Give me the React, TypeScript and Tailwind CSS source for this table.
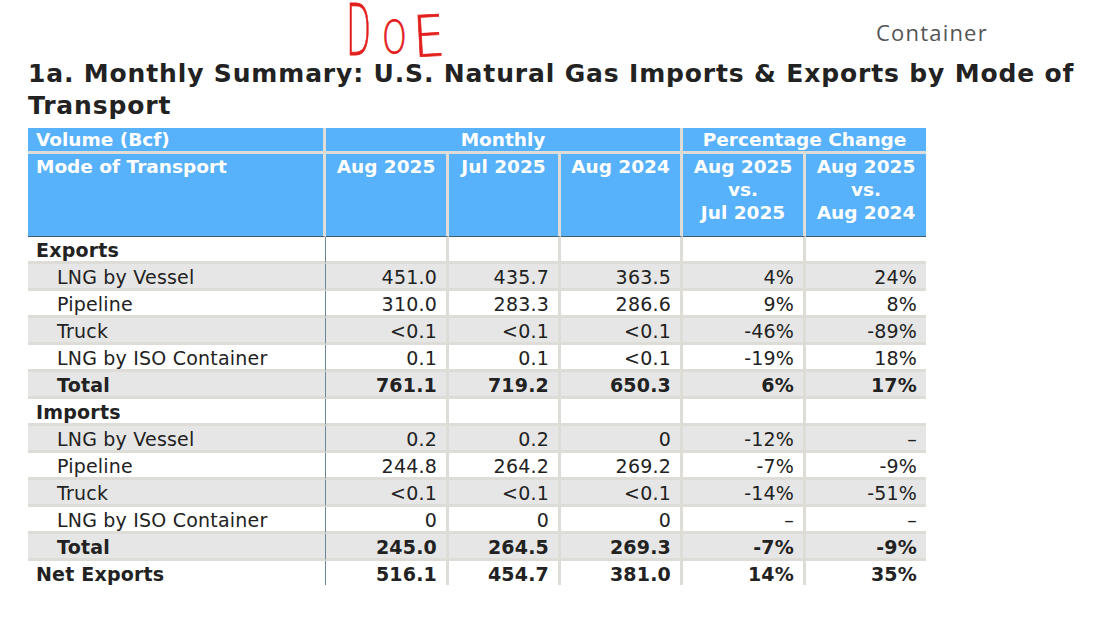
import React from "react";

type Row = {
  label: string;
  kind: "section" | "item" | "total" | "net";
  vals?: string[];
};

const rows: Row[] = [
  { label: "Exports", kind: "section" },
  { label: "LNG by Vessel", kind: "item", vals: ["451.0", "435.7", "363.5", "4%", "24%"] },
  { label: "Pipeline", kind: "item", vals: ["310.0", "283.3", "286.6", "9%", "8%"] },
  { label: "Truck", kind: "item", vals: ["<0.1", "<0.1", "<0.1", "-46%", "-89%"] },
  { label: "LNG by ISO Container", kind: "item", vals: ["0.1", "0.1", "<0.1", "-19%", "18%"] },
  { label: "Total", kind: "total", vals: ["761.1", "719.2", "650.3", "6%", "17%"] },
  { label: "Imports", kind: "section" },
  { label: "LNG by Vessel", kind: "item", vals: ["0.2", "0.2", "0", "-12%", "–"] },
  { label: "Pipeline", kind: "item", vals: ["244.8", "264.2", "269.2", "-7%", "-9%"] },
  { label: "Truck", kind: "item", vals: ["<0.1", "<0.1", "<0.1", "-14%", "-51%"] },
  { label: "LNG by ISO Container", kind: "item", vals: ["0", "0", "0", "–", "–"] },
  { label: "Total", kind: "total", vals: ["245.0", "264.5", "269.3", "-7%", "-9%"] },
  { label: "Net Exports", kind: "net", vals: ["516.1", "454.7", "381.0", "14%", "35%"] },
];

const font = { fontFamily: '"DejaVu Sans", Verdana, sans-serif' };

function DoeMark() {
  return (
    <svg width="112" height="60" viewBox="0 0 112 60" className="block">
      <g
        fill="#e3201d"
        stroke="#e3201d"
        strokeWidth="0.8"
        fontFamily='"DejaVu Sans", sans-serif'
        fontWeight={200}
      >
        <text transform="translate(2 54) scale(0.46 1)" fontSize="71">
          D
        </text>
        <text transform="translate(38 52) scale(0.7 1)" fontSize="45">
          O
        </text>
        <text transform="translate(70 56) rotate(-3) scale(0.88 1)" fontSize="57">
          E
        </text>
      </g>
    </svg>
  );
}

export default function App() {
  return (
    <div className="w-[1112px] h-[627px] bg-white overflow-hidden text-[#222]" style={font}>
      <div className="flex items-start h-[58px]">
        <div className="ml-[344px] mt-[1px]">
          <DoeMark />
        </div>
        <div
          className="ml-[420px] mt-[18px] text-[22px] leading-[28px] tracking-[1.2px] text-[#555]"
          style={{ fontFamily: '"Open Sans", sans-serif' }}
        >
          Container
        </div>
      </div>
      <h1 className="ml-[28px] w-[1084px] text-[25px] leading-[32px] tracking-[0.85px] font-bold text-[#222]">
        1a. Monthly Summary: U.S. Natural Gas Imports &amp; Exports by Mode of Transport
      </h1>
      <table className="ml-[28px] mt-[6px] w-[898px] table-fixed border-separate border-spacing-0">
        <colgroup>
          <col className="w-[298px]" />
          <col className="w-[123px]" />
          <col className="w-[112px]" />
          <col className="w-[122px]" />
          <col className="w-[123px]" />
          <col className="w-[120px]" />
        </colgroup>
        <thead className="text-white font-bold text-[18.5px]">
          <tr>
            <th className="h-[26px] bg-[#57b1fb] border-r-[3px] border-b-[3px] border-[#dddcd7] text-left pl-[8px] pt-[1px] leading-[22px] align-top font-bold">
              Volume (Bcf)
            </th>
            <th
              colSpan={3}
              className="h-[26px] bg-[#57b1fb] border-r-[3px] border-b-[3px] border-[#dddcd7] text-center pt-[1px] leading-[22px] align-top font-bold"
            >
              Monthly
            </th>
            <th
              colSpan={2}
              className="h-[26px] bg-[#57b1fb] border-b-[3px] border-[#dddcd7] text-center pt-[1px] leading-[22px] align-top font-bold"
            >
              Percentage Change
            </th>
          </tr>
          <tr>
            <th className="h-[83px] bg-[#57b1fb] border-r-[3px] border-r-[#dddcd7] border-b border-b-[#3f5d6b] text-left pl-[8px] pt-[1px] leading-[23px] align-top font-bold">
              Mode of Transport
            </th>
            {["Aug 2025", "Jul 2025", "Aug 2024"].map((h) => (
              <th
                key={h}
                className="h-[83px] bg-[#57b1fb] border-r-[3px] border-r-[#dddcd7] border-b border-b-[#3f5d6b] text-center pt-[1px] leading-[23px] align-top font-bold whitespace-nowrap"
              >
                {h}
              </th>
            ))}
            <th className="h-[83px] bg-[#57b1fb] border-r-[3px] border-r-[#dddcd7] border-b border-b-[#3f5d6b] text-center pt-[1px] leading-[23px] align-top font-bold">
              Aug 2025
              <br />
              vs.
              <br />
              Jul 2025
            </th>
            <th className="h-[83px] bg-[#57b1fb] border-b border-b-[#3f5d6b] text-center pt-[1px] leading-[23px] align-top font-bold">
              Aug 2025
              <br />
              vs.
              <br />
              Aug 2024
            </th>
          </tr>
        </thead>
        <tbody className="text-[19px] tracking-[0.2px]">
          {rows.map((r, i) => {
            const gray = i % 2 === 1;
            const last = i === rows.length - 1;
            const bg = gray ? "bg-[#e6e6e6]" : "bg-white";
            const bottom = last ? "h-[24px]" : "h-[27px] border-b-[3px] border-b-[#dddcd7]";
            const bold = r.kind !== "item";
            const pad = r.kind === "item" || r.kind === "total" ? "pl-[29px]" : "pl-[8px]";
            return (
              <tr key={i}>
                <td
                  className={`${bg} ${bottom} ${pad} border-r border-r-[#6c8795] pt-[2px] leading-[22px] align-top whitespace-nowrap ${
                    bold ? "font-bold" : "font-normal"
                  }`}
                >
                  {r.label}
                </td>
                {[0, 1, 2, 3, 4].map((c) => (
                  <td
                    key={c}
                    className={`${bg} ${bottom} ${
                      c < 4 ? "border-r-[3px] border-r-[#dddcd7]" : ""
                    } pr-[9px] pt-[2px] leading-[22px] align-top text-right whitespace-nowrap ${
                      bold ? "font-bold" : "font-normal"
                    }`}
                  >
                    {r.vals ? r.vals[c] : ""}
                  </td>
                ))}
              </tr>
            );
          })}
        </tbody>
      </table>
    </div>
  );
}
